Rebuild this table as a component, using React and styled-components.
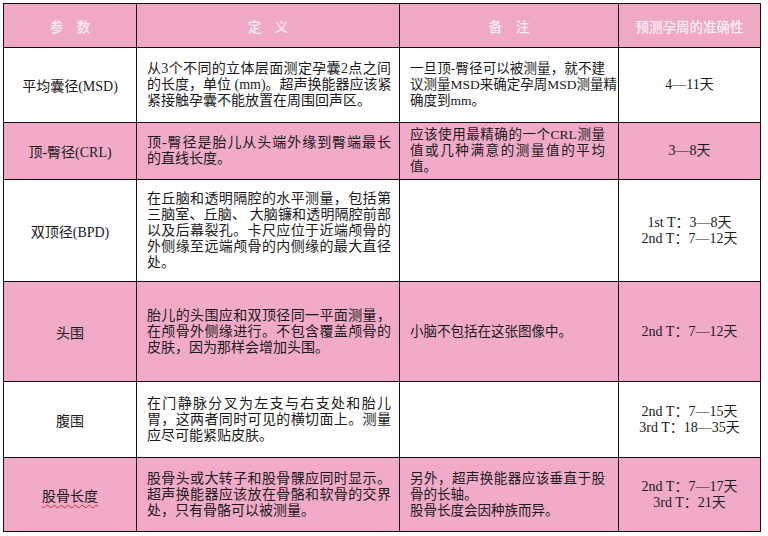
import styled, { createGlobalStyle } from 'styled-components';

const GlobalStyle = createGlobalStyle`
  html, body {
    margin: 0;
    padding: 0;
    background: #ffffff;
  }
  body {
    font-family: "Liberation Serif", "Noto Sans CJK SC", serif;
    color: #1a1a1a;
  }
`;

const PINK = '#f1abc8';

const Page = styled.div`
  padding: 3px 0 0 3px;
`;

const Table = styled.table`
  border-collapse: collapse;
  table-layout: fixed;
  width: 757px;
  border: 1px solid #111;
`;

const HeadCell = styled.th`
  height: 43px;
  padding: 0;
  background: #efa9c5;
  border: 1px solid #111;
  color: #fdf0f5;
  font-family: "Noto Sans CJK SC", sans-serif;
  font-size: 13.5px;
  font-weight: 500;
  text-align: center;
  vertical-align: middle;
`;

const Row = styled.tr`
  background: ${({ $pink }) => ($pink ? PINK : '#ffffff')};
`;

const NameCell = styled.td`
  height: ${({ $h }) => $h}px;
  padding: 0;
  border: 1px solid #111;
  font-size: 14px;
  text-align: center;
  vertical-align: middle;
`;

const TextCell = styled.td`
  height: ${({ $h }) => $h}px;
  padding: 0 ${({ $pr }) => $pr}px 0 10px;
  border: 1px solid #111;
  font-size: ${({ $fs }) => $fs}px;
  line-height: 16px;
  vertical-align: middle;
`;

const Line = styled.div`
  white-space: nowrap;
  text-align: justify;
  text-align-last: ${({ $fill }) => ($fill ? 'justify' : 'left')};
`;

const RangeCell = styled.td`
  height: ${({ $h }) => $h}px;
  padding: 0;
  border: 1px solid #111;
  font-size: 14px;
  line-height: 16px;
  text-align: center;
  vertical-align: middle;
`;

const Marked = styled.span`
  text-decoration: underline wavy #c8323a;
  text-decoration-thickness: 1px;
  text-underline-offset: 3px;
`;

const rows = [
  {
    h: 74,
    name: '平均囊径(MSD)',
    def: ['从3个不同的立体层面测定孕囊2点之间', '的长度，单位 (mm)。超声换能器应该紧', '紧接触孕囊不能放置在周围回声区。'],
    note: ['一旦顶-臀径可以被测量，就不建', '议测量MSD来确定孕周MSD测量精', '确度到mm。'],
    range: ['4—11天'],
  },
  {
    h: 56,
    pink: true,
    name: '顶-臀径(CRL)',
    def: ['顶-臀径是胎儿从头端外缘到臀端最长', '的直线长度。'],
    note: ['应该使用最精确的一个CRL测量', '值或几种满意的测量值的平均', '值。'],
    range: ['3—8天'],
  },
  {
    h: 101,
    name: '双顶径(BPD)',
    def: ['在丘脑和透明隔腔的水平测量，包括第', '三脑室、丘脑、 大脑镰和透明隔腔前部', '以及后幕裂孔。卡尺应位于近端颅骨的', '外侧缘至远端颅骨的内侧缘的最大直径', '处。'],
    note: [],
    range: ['1st T：3—8天', '2nd T：7—12天'],
  },
  {
    h: 99,
    pink: true,
    name: '头围',
    def: ['胎儿的头围应和双顶径同一平面测量，', '在颅骨外侧缘进行。不包含覆盖颅骨的', '皮肤，因为那样会增加头围。'],
    note: ['小脑不包括在这张图像中。'],
    range: ['2nd T：7—12天'],
  },
  {
    h: 75,
    name: '腹围',
    def: ['在门静脉分叉为左支与右支处和胎儿', '胃，这两者同时可见的横切面上。测量', '应尽可能紧贴皮肤。'],
    note: [],
    range: ['2nd T：7—15天', '3rd T：18—35天'],
  },
  {
    h: 73,
    pink: true,
    name: '股骨长度',
    marked: true,
    def: ['股骨头或大转子和股骨髁应同时显示。', '超声换能器应该放在骨骼和软骨的交界', '处，只有骨骼可以被测量。'],
    note: ['另外，超声换能器应该垂直于股', '骨的长轴。', '股骨长度会因种族而异。'],
    noteFill: [true, false, false],
    range: ['2nd T：7—17天', '3rd T：21天'],
  },
];

const Lines = ({ lines, fill }) =>
  lines.map((text, i) => (
    <Line key={i} $fill={fill ? fill[i] : i < lines.length - 1}>
      {text}
    </Line>
  ));

const App = () => (
  <Page lang="zh-CN">
    <GlobalStyle />
    <Table>
      <colgroup>
        <col style={{ width: 133 }} />
        <col style={{ width: 263 }} />
        <col style={{ width: 219 }} />
        <col style={{ width: 142 }} />
      </colgroup>
      <thead>
        <tr>
          <HeadCell>参　数</HeadCell>
          <HeadCell>定　义</HeadCell>
          <HeadCell>备　注</HeadCell>
          <HeadCell>预测孕周的准确性</HeadCell>
        </tr>
      </thead>
      <tbody>
        {rows.map((r) => (
          <Row key={r.name} $pink={r.pink}>
            <NameCell $h={r.h}>{r.marked ? <Marked>{r.name}</Marked> : r.name}</NameCell>
            <TextCell $h={r.h} $fs={14} $pr={8}>
              <Lines lines={r.def} />
            </TextCell>
            <TextCell $h={r.h} $fs={13.5} $pr={13}>
              <Lines lines={r.note} fill={r.noteFill} />
            </TextCell>
            <RangeCell $h={r.h}>
              {r.range.map((t) => (
                <div key={t}>{t}</div>
              ))}
            </RangeCell>
          </Row>
        ))}
      </tbody>
    </Table>
  </Page>
);

export default App;
